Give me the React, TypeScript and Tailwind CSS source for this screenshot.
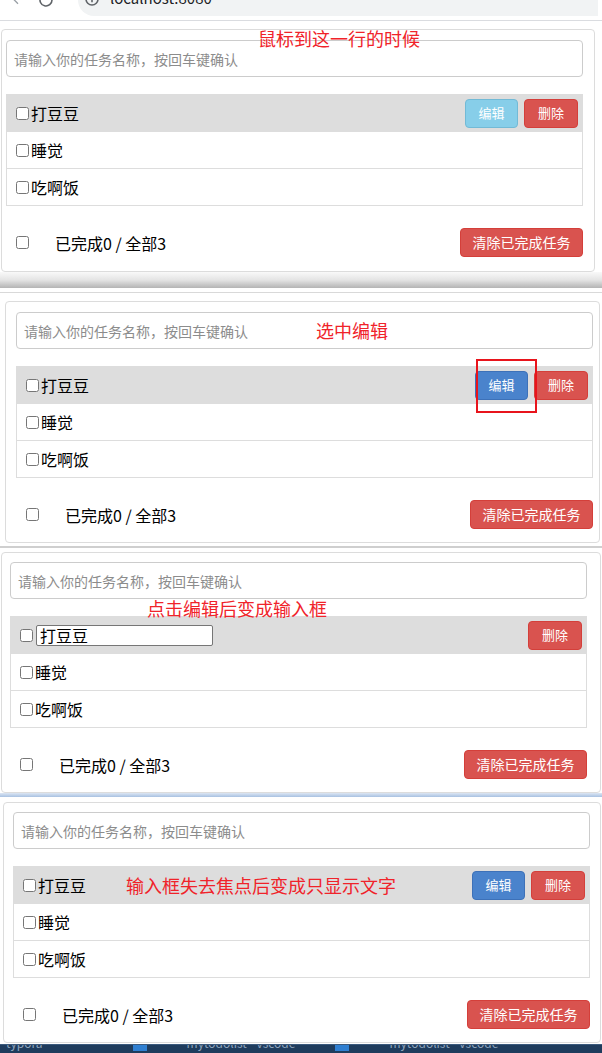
import clsx from "clsx";

type Mode = "hover" | "selected" | "editing" | "blurred";

const todos = ["打豆豆", "睡觉", "吃啊饭"];

function Check({ className }: { className?: string }) {
  return (
    <input
      type="checkbox"
      className={clsx("h-[13px] w-[13px] shrink-0", className)}
    />
  );
}

function TodoCard({ cardClass, mode }: { cardClass: string; mode: Mode }) {
  return (
    <div
      className={clsx(
        "rounded-[4px] border border-[#dcdcdc] bg-white",
        cardClass
      )}
    >
      <input
        className="block h-[37px] w-[577px] rounded-[4px] border border-[#cccccc] px-[7px] text-[14px] text-black outline-none placeholder:text-[#8c8c8c]"
        placeholder="请输入你的任务名称，按回车键确认"
      />
      <ul className="mt-[17px] w-[577px] border border-[#dddddd]">
        {todos.map((t, i) => (
          <li
            key={t}
            className={clsx(
              "flex items-center pl-[9px] pr-[4px]",
              i > 0 ? "h-[37px] border-t border-[#dddddd]" : "h-[36px] bg-[#dddddd]"
            )}
          >
            <Check />
            {i === 0 && mode === "editing" ? (
              <input
                defaultValue={t}
                className="ml-[3px] h-[21px] w-[177px] rounded-[2px] border border-[#767676] bg-white px-[3px] text-[16px] leading-[19px] text-black outline-none"
              />
            ) : (
              <span className="ml-[2px] text-[16px] leading-[20px] text-black">
                {t}
              </span>
            )}
            {i === 0 && (
              <div className="ml-auto flex gap-[6px]">
                {mode !== "editing" && (
                  <button
                    type="button"
                    className={clsx(
                      "h-[29px] w-[53px] rounded-[4px] border text-[13px] text-white",
                      mode === "hover"
                        ? "border-[#72bad6] bg-[#87cee9]"
                        : "border-[#3d71b8] bg-[#4a83cc]"
                    )}
                  >
                    编辑
                  </button>
                )}
                <button
                  type="button"
                  className="h-[29px] w-[54px] rounded-[4px] border border-[#d43f3a] bg-[#d9534f] text-[13px] text-white"
                >
                  删除
                </button>
              </div>
            )}
          </li>
        ))}
      </ul>
      <div className="mt-[22px] flex h-[29px] w-[577px] items-center pl-[10px]">
        <Check />
        <span className="ml-[26px] text-[16px] leading-[20px] text-black">
          已完成0 / 全部3
        </span>
        <button
          type="button"
          className="ml-auto h-[29px] w-[123px] rounded-[4px] border border-[#d43f3a] bg-[#d9534f] text-[14px] text-white"
        >
          清除已完成任务
        </button>
      </div>
    </div>
  );
}

function BrowserBar() {
  return (
    <div className="flex h-[21px] items-start overflow-hidden border-b border-[#dadce0] bg-white">
      <svg
        className="ml-[10px] mt-[-9px] shrink-0"
        width="16"
        height="16"
        viewBox="0 0 24 24"
        fill="none"
        stroke="#9aa0a6"
        strokeWidth="2"
      >
        <path d="M19 12H5M12 19l-7-7 7-7" />
      </svg>
      <svg
        className="ml-[12px] mt-[-8px] shrink-0"
        width="16"
        height="16"
        viewBox="0 0 24 24"
        fill="none"
        stroke="#5f6368"
        strokeWidth="2.4"
      >
        <path d="M21 12a9 9 0 1 1-3-6.7L21 8" />
        <path d="M21 3v5h-5" />
      </svg>
      <div className="ml-[24px] mr-[4px] flex h-[16px] flex-1 items-start rounded-bl-[16px] bg-[#f1f3f4]">
        <svg
          className="ml-[6px] mt-[-9px] shrink-0"
          width="16"
          height="16"
          viewBox="0 0 24 24"
          fill="none"
          stroke="#5f6368"
          strokeWidth="2.4"
        >
          <circle cx="12" cy="12" r="9" />
          <path d="M12 11v6" />
        </svg>
        <span className="ml-[10px] mt-[-10px] text-[15px] leading-[16px] text-[#202124]">
          localhost:8080
        </span>
      </div>
    </div>
  );
}

export default function App() {
  const red = "absolute text-[18px] leading-[18px] text-[#f0232a]";
  return (
    <div className="relative h-[1053px] w-[602px] overflow-hidden bg-white font-['Noto_Sans_CJK_SC','Noto_Sans',sans-serif]">
      <BrowserBar />
      <div className="h-[8px]" />
      <TodoCard
        mode="hover"
        cardClass="ml-[1px] w-[594px] pl-[4px] pt-[10px] pb-[14px]"
      />
      <div className="h-[16px] bg-gradient-to-b from-[#f9f9f9] via-[#e4e4e4] to-[#b4b4b4]" />
      <div className="h-[4px]" />
      <div className="h-px bg-[#d9d9d9]" />
      <div className="h-[8px]" />
      <TodoCard
        mode="selected"
        cardClass="ml-[5px] w-[595px] pl-[10px] pt-[10px] pb-[13px]"
      />
      <div className="h-[3px]" />
      <div className="h-[2px] bg-[#cfcfcf]" />
      <div className="h-[4px]" />
      <TodoCard
        mode="editing"
        cardClass="ml-[1px] w-[600px] pl-[8px] pt-[9px] pb-[13px]"
      />
      <div className="h-[4px] bg-gradient-to-b from-[#dce6f3] to-[#a8c1e1]" />
      <div className="h-[5px]" />
      <TodoCard
        mode="blurred"
        cardClass="ml-[3px] w-[598px] pl-[9px] pt-[9px] pb-[13px]"
      />
      <div className="h-px" />
      <div className="flex h-[9px] items-start gap-[40px] overflow-hidden border-t border-[#3b5a7d] bg-[#1f3c5d] pl-[6px]">
        <span className="mt-[-9px] text-[12px] leading-[14px] text-[#8ea4bd]">typora</span>
        <div className="ml-[50px] mt-[-2px] h-[8px] w-[14px] bg-[#2f7fd1]" />
        <span className="mt-[-9px] text-[12px] leading-[14px] text-[#8ea4bd]">mytodolist - vscode</span>
        <div className="mt-[-2px] h-[8px] w-[14px] bg-[#2f7fd1]" />
        <span className="mt-[-9px] text-[12px] leading-[14px] text-[#8ea4bd]">mytodolist - vscode</span>
      </div>

      <span className={clsx(red, "left-[258px] top-[29px]")}>鼠标到这一行的时候</span>
      <span className={clsx(red, "left-[316px] top-[321px]")}>选中编辑</span>
      <div className="absolute left-[476px] top-[359px] h-[54px] w-[61px] border-2 border-[#e8141c]" />
      <span className={clsx(red, "left-[147px] top-[599px]")}>点击编辑后变成输入框</span>
      <span className={clsx(red, "left-[126px] top-[876px]")}>输入框失去焦点后变成只显示文字</span>
    </div>
  );
}
